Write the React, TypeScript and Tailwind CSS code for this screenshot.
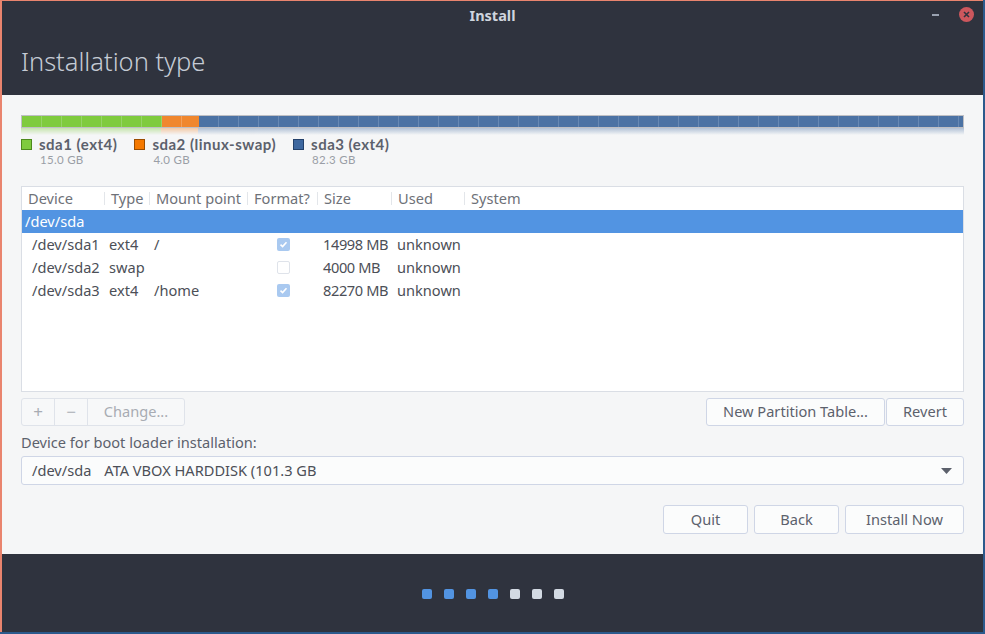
import React from "react";

const font = { fontFamily: '"Noto Sans", "Open Sans", sans-serif' };
const legendFont = { fontFamily: 'Lato, "Noto Sans", sans-serif' };

function Check({ on }: { on: boolean }) {
  return (
    <div
      className={`w-[13px] h-[13px] rounded-[2px] flex items-center justify-center ${
        on ? "bg-[#a9c9f0]" : "bg-white border border-[#dfe3ea]"
      }`}
    >
      {on && (
        <svg width="9" height="9" viewBox="0 0 9 9">
          <path d="M1.5 4.6 L3.6 6.6 L7.5 2.2" stroke="white" strokeWidth="1.6" fill="none" />
        </svg>
      )}
    </div>
  );
}

function Legend({ color, border, name, size }: { color: string; border: string; name: string; size: string }) {
  return (
    <div className="flex items-start gap-[7px]" style={legendFont}>
      <div className={`w-[11px] h-[11px] mt-[3px] border ${color} ${border}`} />
      <div className="flex flex-col">
        <span className="text-[15px] font-bold tracking-[0.5px] text-[#5c616c] leading-[16px] whitespace-nowrap">{name}</span>
        <span className="text-[11.5px] tracking-[0.3px] text-[#9a9ea6] leading-[16px] ml-[1px]">{size}</span>
      </div>
    </div>
  );
}

const rows = [
  { dev: "/dev/sda1", type: "ext4", mount: "/", fmt: true, size: "14998 MB" },
  { dev: "/dev/sda2", type: "swap", mount: "", fmt: false, size: "4000 MB" },
  { dev: "/dev/sda3", type: "ext4", mount: "/home", fmt: true, size: "82270 MB" },
];

const btn =
  "flex items-center justify-center border border-[#cfd6e6] rounded-[3px] bg-[#fbfcfc] text-[14.6px] text-[#5c616c] whitespace-nowrap";

const hcol = "h-[13px] flex items-center pl-[6px] border-r border-[#e3e6ea] whitespace-nowrap";

export default function App() {
  return (
    <div className="w-[985px] h-[634px] bg-[#2c5a8c] overflow-hidden" style={font}>
      <div className="w-[983px] h-[632px] bg-[#2f333e] border-l-2 border-t border-[#e9846e] flex flex-col">
        {/* Title bar */}
        <div className="h-[30px] relative flex items-center justify-center">
          <span className="text-[14.5px] font-bold text-[#cfd5de]">Install</span>
          <div className="absolute right-[44px] top-[13px] w-[7px] h-[2px] bg-[#9aa2b1]" />
          <div className="absolute right-[9px] top-[6px] w-[15px] h-[15px] rounded-full bg-[#cc575d] flex items-center justify-center">
            <svg width="7" height="7" viewBox="0 0 7 7">
              <path d="M1 1 L6 6 M6 1 L1 6" stroke="#2f333e" strokeWidth="1.6" />
            </svg>
          </div>
        </div>
        {/* Header */}
        <div className="h-[64px] flex items-center pl-[19px] pb-[4px]">
          <span className="text-[25.5px] text-[#c5cbd5] font-light">Installation type</span>
        </div>
        {/* Content */}
        <div className="h-[459px] bg-[#f5f6f7] pl-[19px] pr-[19px] pt-[20px] flex flex-col">
          {/* Partition bar */}
          <div className="relative">
            <div className="h-[13px] flex border border-[#6b6f78]/40">
              <div className="w-[140px] bg-[repeating-linear-gradient(90deg,#7fcb3e_0px,#7fcb3e_19px,#95d466_19px,#95d466_20px)]" />
              <div className="w-[37px] bg-[repeating-linear-gradient(90deg,#f0872e_0px,#f0872e_19px,#f4a05a_19px,#f4a05a_20px)]" />
              <div className="flex-1 bg-[repeating-linear-gradient(90deg,#4b72a4_0px,#4b72a4_19px,#6688b4_19px,#6688b4_20px)]" />
            </div>
            <div className="h-[7px] flex opacity-40">
              <div className="w-[140px] bg-gradient-to-b from-[#7fcb3e] to-transparent" />
              <div className="w-[37px] bg-gradient-to-b from-[#f0872e] to-transparent" />
              <div className="flex-1 bg-gradient-to-b from-[#4b72a4] to-transparent" />
            </div>
          </div>
          <div className="flex gap-[17px] mt-[1px] h-[33px]">
            <Legend color="bg-[#7fcb3e]" border="border-[#4e8a1d]" name="sda1 (ext4)" size="15.0 GB" />
            <Legend color="bg-[#f57900]" border="border-[#9b4d00]" name="sda2 (linux-swap)" size="4.0 GB" />
            <Legend color="bg-[#3e68a0]" border="border-[#23416b]" name="sda3 (ext4)" size="82.3 GB" />
          </div>
          {/* Table */}
          <div className="mt-[17px] h-[206px] border border-[#dadee5] bg-white flex flex-col text-[14.6px] text-[#4c4f57]">
            <div className="h-[23px] flex items-center text-[#6e7178]">
              <div className={`${hcol} w-[83px]`}>Device</div>
              <div className={`${hcol} w-[45px]`}>Type</div>
              <div className={`${hcol} w-[98px]`}>Mount point</div>
              <div className={`${hcol} w-[70px]`}>Format?</div>
              <div className={`${hcol} w-[74px]`}>Size</div>
              <div className={`${hcol} w-[73px]`}>Used</div>
              <div className="pl-[6px]">System</div>
            </div>
            <div className="h-[23px] bg-[#5294e2] text-white flex items-center pl-[3px]">/dev/sda</div>
            {rows.map((r) => (
              <div key={r.dev} className="h-[23px] flex items-center whitespace-nowrap">
                <div className="w-[87px] pl-[10px]">{r.dev}</div>
                <div className="w-[45px]">{r.type}</div>
                <div className="w-[123px]">{r.mount}</div>
                <div className="w-[46px]">
                  <Check on={r.fmt} />
                </div>
                <div className="w-[74px] tracking-[-0.4px]">{r.size}</div>
                <div>unknown</div>
              </div>
            ))}
          </div>
          {/* Buttons */}
          <div className="mt-[6px] flex justify-between">
            <div className="flex h-[28px] border border-[#dfe3ea] rounded-[3px] bg-[#f7f8f9] text-[#a8acb3] text-[14.6px]">
              <div className="w-[33px] flex items-center justify-center border-r border-[#dfe3ea] text-[17px]">+</div>
              <div className="w-[33px] flex items-center justify-center border-r border-[#dfe3ea] text-[17px]">−</div>
              <div className="w-[96px] flex items-center justify-center">Change...</div>
            </div>
            <div className="flex gap-[1px]">
              <div className={`${btn} h-[28px] w-[179px]`}>New Partition Table...</div>
              <div className={`${btn} h-[28px] w-[78px]`}>Revert</div>
            </div>
          </div>
          <div className="mt-[7px] h-[18px] text-[14.6px] text-[#5c616c] leading-[18px]">
            Device for boot loader installation:
          </div>
          <div className="mt-[5px] h-[29px] border border-[#cfd6e6] rounded-[3px] bg-[#fbfcfc] flex items-center justify-between pl-[10px] pr-[11px] text-[14.6px] text-[#4c4f57]">
            <span className="whitespace-nowrap">
              /dev/sda<span className="ml-[13px]">ATA VBOX HARDDISK (101.3 GB</span>
            </span>
            <svg width="11" height="6" viewBox="0 0 11 6">
              <path d="M0 0 L11 0 L5.5 6 Z" fill="#5c616c" />
            </svg>
          </div>
          <div className="mt-[20px] flex justify-end gap-[6px]">
            <div className={`${btn} h-[29px] w-[85px]`}>Quit</div>
            <div className={`${btn} h-[29px] w-[85px]`}>Back</div>
            <div className={`${btn} h-[29px] w-[119px]`}>Install Now</div>
          </div>
        </div>
        {/* Footer */}
        <div className="flex-1 flex items-center justify-center gap-[12px] pt-[1px]">
          {[0, 1, 2, 3, 4, 5, 6].map((i) => (
            <div
              key={i}
              className={`w-[10px] h-[10px] rounded-[2px] ${i < 4 ? "bg-[#5294e2]" : "bg-[#d3dae3]"}`}
            />
          ))}
        </div>
      </div>
    </div>
  );
}
